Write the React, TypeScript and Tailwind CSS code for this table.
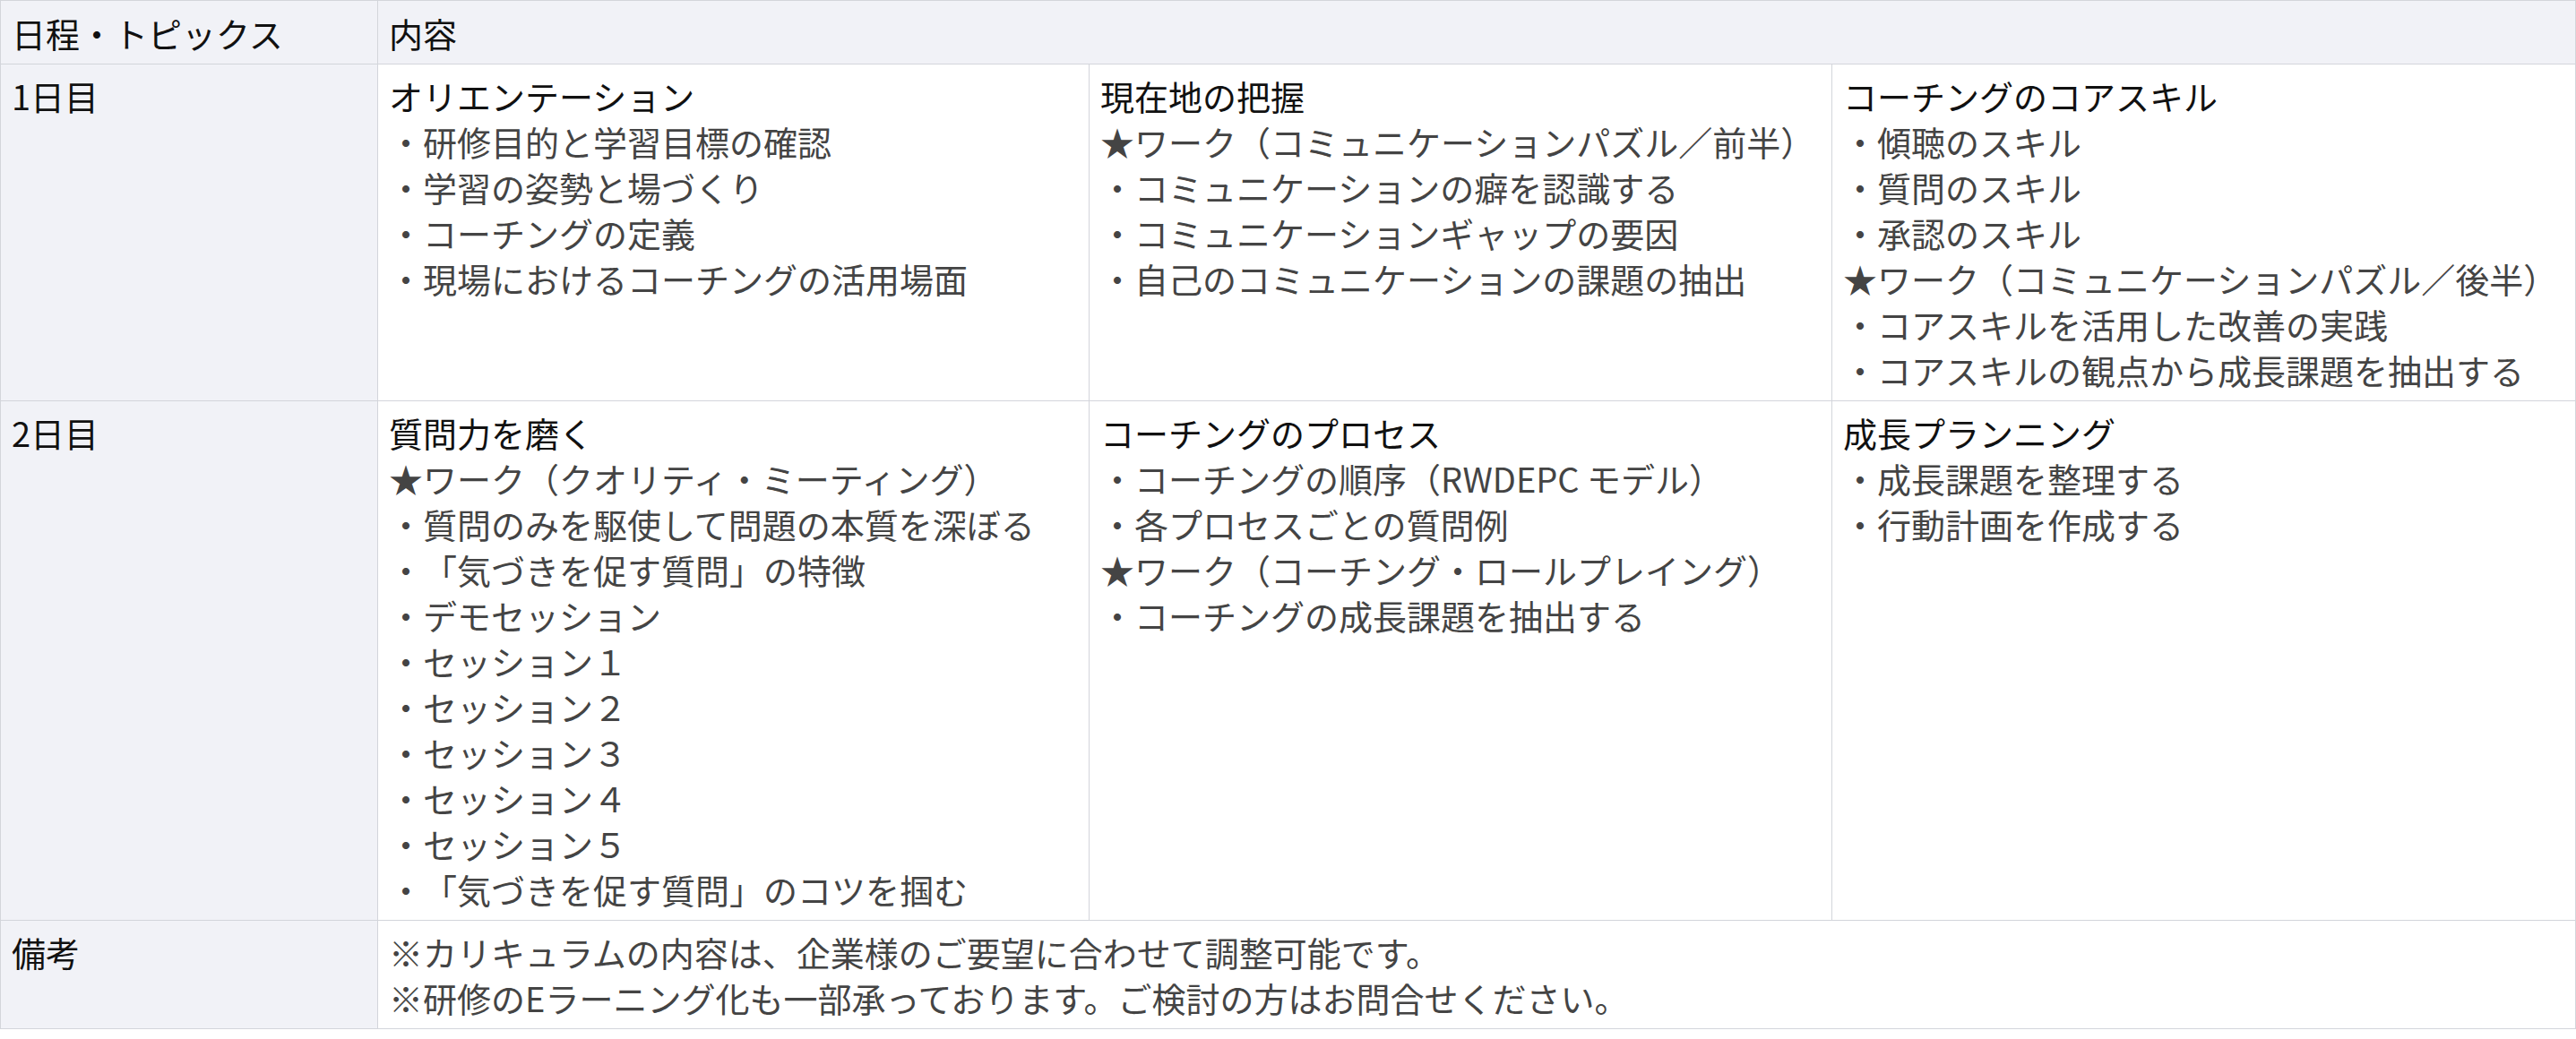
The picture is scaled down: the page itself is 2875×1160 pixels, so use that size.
import React from "react";

type Block = { title: string; lines: string[] };
type Day = { day: string; blocks: Block[] };

const days: Day[] = [
  {
    day: "1日目",
    blocks: [
      {
        title: "オリエンテーション",
        lines: [
          "・研修目的と学習目標の確認",
          "・学習の姿勢と場づくり",
          "・コーチングの定義",
          "・現場におけるコーチングの活用場面",
        ],
      },
      {
        title: "現在地の把握",
        lines: [
          "★ワーク（コミュニケーションパズル／前半）",
          "・コミュニケーションの癖を認識する",
          "・コミュニケーションギャップの要因",
          "・自己のコミュニケーションの課題の抽出",
        ],
      },
      {
        title: "コーチングのコアスキル",
        lines: [
          "・傾聴のスキル",
          "・質問のスキル",
          "・承認のスキル",
          "★ワーク（コミュニケーションパズル／後半）",
          "・コアスキルを活用した改善の実践",
          "・コアスキルの観点から成長課題を抽出する",
        ],
      },
    ],
  },
  {
    day: "2日目",
    blocks: [
      {
        title: "質問力を磨く",
        lines: [
          "★ワーク（クオリティ・ミーティング）",
          "・質問のみを駆使して問題の本質を深ぼる",
          "・「気づきを促す質問」の特徴",
          "・デモセッション",
          "・セッション１",
          "・セッション２",
          "・セッション３",
          "・セッション４",
          "・セッション５",
          "・「気づきを促す質問」のコツを掴む",
        ],
      },
      {
        title: "コーチングのプロセス",
        lines: [
          "・コーチングの順序（RWDEPC モデル）",
          "・各プロセスごとの質問例",
          "★ワーク（コーチング・ロールプレイング）",
          "・コーチングの成長課題を抽出する",
        ],
      },
      {
        title: "成長プランニング",
        lines: ["・成長課題を整理する", "・行動計画を作成する"],
      },
    ],
  },
];

const notes = [
  "※カリキュラムの内容は、企業様のご要望に合わせて調整可能です。",
  "※研修のEラーニング化も一部承っております。ご検討の方はお問合せください。",
];

function Cell({ block }: { block: Block }) {
  return (
    <td className="border border-[#d3d5db] bg-white px-[12px] py-[9px] align-top">
      <div className="whitespace-nowrap text-[#111111]">{block.title}</div>
      {block.lines.map((l, i) => (
        <div key={i} className="whitespace-nowrap text-[#444444]">
          {l}
        </div>
      ))}
    </td>
  );
}

export default function App() {
  return (
    <div className="min-h-screen bg-white font-['Noto_Sans_CJK_JP','Noto_Sans',sans-serif] text-[38px] leading-[51px] [text-spacing-trim:space-all]">
      <table className="w-[2874px] table-fixed border-collapse border border-[#d3d5db]">
        <colgroup>
          <col className="w-[421px]" />
          <col className="w-[794px]" />
          <col className="w-[829px]" />
          <col className="w-[830px]" />
        </colgroup>
        <thead>
          <tr className="bg-[#f1f2f7] text-[#111111]">
            <th className="border border-[#d3d5db] px-[12px] pb-[9px] pt-[10px] text-left font-normal">
              日程・トピックス
            </th>
            <th colSpan={3} className="border border-[#d3d5db] px-[12px] pb-[9px] pt-[10px] text-left font-normal">
              内容
            </th>
          </tr>
        </thead>
        <tbody>
          {days.map((d) => (
            <tr key={d.day}>
              <td className="border border-[#d3d5db] bg-[#f1f2f7] px-[12px] py-[9px] align-top text-[#111111]">
                {d.day}
              </td>
              {d.blocks.map((b) => (
                <Cell key={b.title} block={b} />
              ))}
            </tr>
          ))}
          <tr>
            <td className="border border-[#d3d5db] bg-[#f1f2f7] px-[12px] py-[9px] align-top text-[#111111]">
              備考
            </td>
            <td colSpan={3} className="border border-[#d3d5db] bg-white px-[12px] py-[9px] align-top text-[#444444]">
              {notes.map((n, i) => (
                <div key={i} className="whitespace-nowrap">
                  {n}
                </div>
              ))}
            </td>
          </tr>
        </tbody>
      </table>
    </div>
  );
}
